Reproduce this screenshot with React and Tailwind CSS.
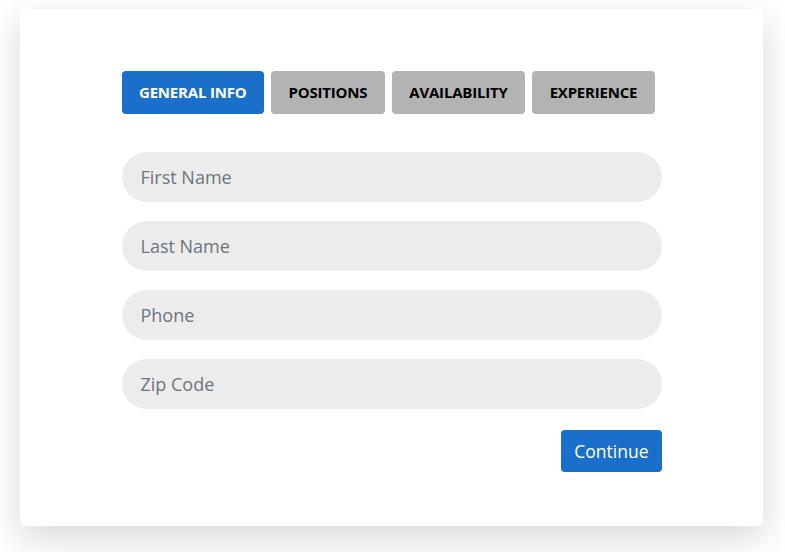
import React, { useState } from 'react';

const tabs = ['General Info', 'Positions', 'Availability', 'Experience'];
const fields = ['First Name', 'Last Name', 'Phone', 'Zip Code'];

export default function App() {
  const [active, setActive] = useState(0);

  return (
    <div className="min-h-screen bg-white pt-[9px] pl-[20px] pr-[22px] pb-[26px] font-['Open_Sans',sans-serif]">
      <div className="h-[517px] rounded-[5px] bg-white shadow-[0_12px_36px_rgba(0,0,0,0.16)] pt-[62px]">
        <div className="mx-auto w-[540px]">
          {/* Tabs */}
          <div className="flex gap-[7px]">
            {tabs.map((t, i) => (
              <button
                key={t}
                onClick={() => setActive(i)}
                className={`h-[43px] rounded-[4px] px-[17.5px] text-[15px] font-bold uppercase tracking-[-0.2px] ${
                  i === active ? 'bg-[#1a6fcb] text-white' : 'bg-[#b3b3b3] text-black'
                }`}
              >
                {t}
              </button>
            ))}
          </div>

          {/* Fields */}
          <div className="mt-[38px] flex flex-col gap-[19px]">
            {fields.map((f) => (
              <input
                key={f}
                type="text"
                placeholder={f}
                className="h-[50px] w-full rounded-full bg-[#ececec] px-[19px] text-[18px] text-gray-800 placeholder-[#6c757d] outline-none"
              />
            ))}
          </div>

          <div className="mt-[21px] flex justify-end">
            <button className="h-[42px] rounded-[4px] bg-[#1a6fcb] px-[13px] text-[17.5px] text-white">
              Continue
            </button>
          </div>
        </div>
      </div>
    </div>
  );
}
